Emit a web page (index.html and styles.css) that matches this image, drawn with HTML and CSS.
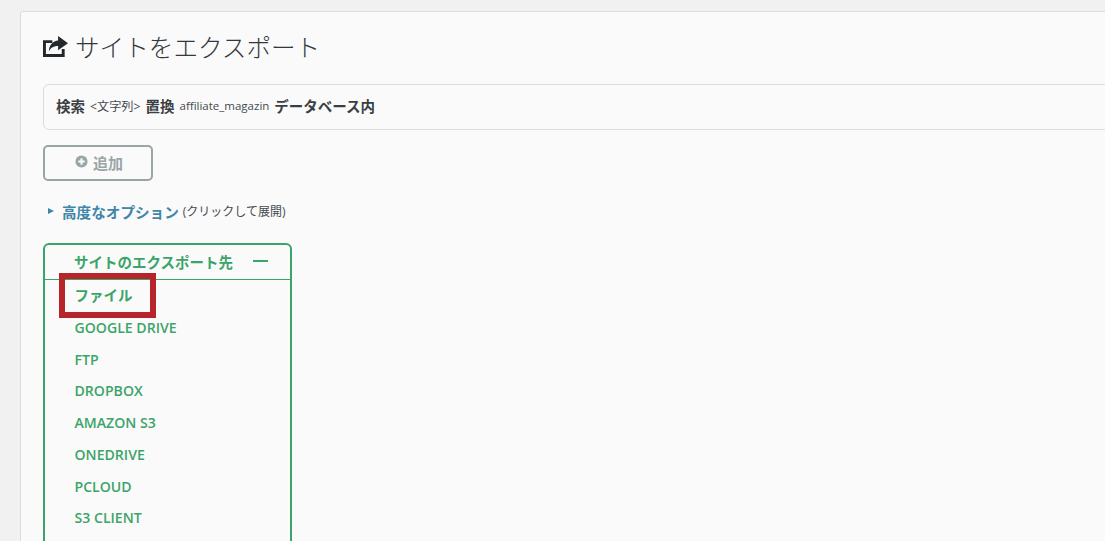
FILE: index.html
```html
<!DOCTYPE html>
<html lang="ja">
<head>
<meta charset="utf-8">
<title>サイトをエクスポート</title>
<link rel="stylesheet" href="styles.css">
</head>
<body>
<main class="card">
  <h1 class="title">
    <svg class="title-icon" viewBox="0 0 24 20" aria-hidden="true">
      <path d="M0 4H9V6.6H2.8V17.2H18V12.5H20.8V20H0Z" fill="#23282d"/>
      <path d="M14.5 0L24 6.8L14.5 13.5V9.5C10.5 9.5 7.8 10.8 5.6 14.5C5.8 8.5 9.5 4.5 14.5 4.2Z" fill="#23282d"/>
    </svg>
    <span>サイトをエクスポート</span>
  </h1>
  <div class="search-bar">
    <b>検索</b> <small class="sm-cjk">&lt;文字列&gt;</small> <b>置換</b> <small>affiliate_magazin</small> <b>データベース内</b>
  </div>
  <button class="add-btn" type="button">
    <svg class="add-icon" viewBox="0 0 14 14" aria-hidden="true">
      <circle cx="7" cy="7" r="6.5" fill="#9aa5a5"/>
      <path d="M7 3.5V10.5M3.5 7H10.5" stroke="#fafafa" stroke-width="2.2"/>
    </svg>
    <span>追加</span>
  </button>
  <div class="advanced">
    <span class="caret"></span>
    <a class="advanced-link">高度なオプション</a>
    <span class="advanced-note">(クリックして展開)</span>
  </div>
  <section class="export-box">
    <header class="export-head">
      <span>サイトのエクスポート先</span>
      <span class="dash"></span>
    </header>
    <ul class="export-list">
      <li class="bold">ファイル</li>
      <li>GOOGLE DRIVE</li>
      <li>FTP</li>
      <li>DROPBOX</li>
      <li>AMAZON S3</li>
      <li>ONEDRIVE</li>
      <li>PCLOUD</li>
      <li>S3 CLIENT</li>
    </ul>
    <div class="highlight"></div>
  </section>
</main>
</body>
</html>
```
FILE: styles.css
```css
* { box-sizing: border-box; }
html, body { height: 100%; overflow: hidden; }
body {
  margin: 0;
  padding: 11px 0 0 20px;
  background: #f1f1f1;
  font-family: "Open Sans", "Noto Sans CJK JP", sans-serif;
  color: #3a3f44;
}
.card {
  width: 1200px;
  height: 700px;
  padding: 0 0 0 22px;
  background: #fafafa;
  border: 1px solid #dcdcdc;
  border-radius: 3px;
}
.title {
  display: flex;
  align-items: center;
  gap: 7px;
  height: 68px;
  margin: 0 0 4px;
  font-size: 24.6px;
  font-weight: 300;
  color: #33383d;
  font-family: "Noto Sans CJK JP", sans-serif;
}
.title-icon { width: 25px; height: 21px; margin-top: 1px; }
.search-bar {
  height: 46px;
  padding: 0 12px 3px;
  display: flex;
  align-items: center;
  gap: 5px;
  background: #fafafa;
  border: 1px solid #dcdcdc;
  border-radius: 6px;
}
.search-bar b { font-size: 14.5px; font-weight: 700; color: #3a3f44; }
.search-bar small { font-size: 11.5px; color: #454a4f; }
.search-bar .sm-cjk { font-size: 12.2px; }
.add-btn {
  display: flex;
  align-items: center;
  justify-content: center;
  gap: 5px;
  width: 110px;
  height: 36px;
  margin: 15px 0 0;
  padding: 0 0 2px 2px;
  background: transparent;
  border: 2px solid #9aa5a5;
  border-radius: 5px;
  color: #9aa5a5;
  font-family: inherit;
  font-size: 15px;
  font-weight: 700;
}
.add-icon { width: 13px; height: 13px; margin-top: -1px; }
.advanced {
  display: flex;
  align-items: center;
  height: 20px;
  margin-top: 20px;
}
.caret {
  width: 0;
  height: 0;
  margin: 0 8px 0 5px;
  border-left: 6px solid #3d87ad;
  border-top: 3.5px solid transparent;
  border-bottom: 3.5px solid transparent;
}
.advanced-link { font-size: 14.6px; font-weight: 700; color: #3f86a8; }
.advanced-note { margin-left: 4px; font-size: 12px; color: #454a4f; }
.export-box {
  position: relative;
  width: 249px;
  height: 400px;
  margin-top: 22px;
  border: 2px solid #3ba468;
  border-radius: 6px;
  color: #3ba468;
  font-weight: 700;
}
.export-head {
  display: flex;
  align-items: center;
  justify-content: space-between;
  height: 35px;
  padding: 0 22px 2px 29px;
  border-bottom: 1px solid #3ba468;
  font-size: 14.5px;
}
.dash { width: 15px; height: 2px; background: #3ba468; }
.export-list {
  margin: 0;
  padding: 0 0 0 29.5px;
  list-style: none;
  font-size: 14.1px;
  font-weight: 550;
}
.export-list li { height: 31.75px; line-height: 31.75px; }
.export-list .bold { font-size: 14.5px; font-weight: 700; }
.highlight {
  position: absolute;
  left: 14px;
  top: 28px;
  width: 97px;
  height: 45px;
  border: 6px solid #b5252a;
}
```
